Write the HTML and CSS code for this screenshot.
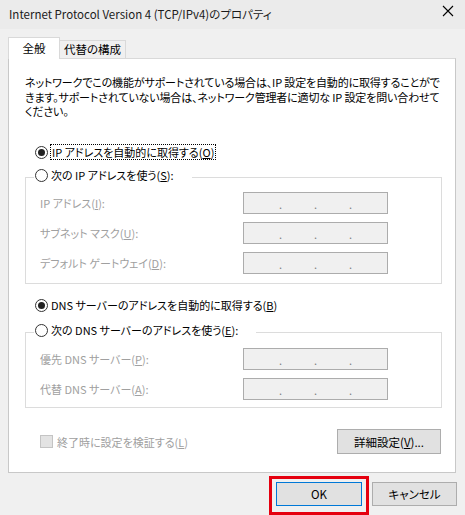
FILE: index.html
```html
<!DOCTYPE html>
<html>
<head>
    <title>Internet Protocol Version 4 (TCP/IPv4)のプロパティ</title>
    <link rel="stylesheet" href="styles.css">
</head>
<body>
    <div class="window">
        <div class="titlebar">
            <span class="title">Internet Protocol Version 4 (TCP/IPv4)のプロパティ</span>
            <svg class="close" width="12" height="12" viewBox="0 0 12 12">
                <path d="M1 1 L11 11 M11 1 L1 11" stroke="#000" stroke-width="1.1" fill="none"/>
            </svg>
        </div>

        <div class="tabs">
            <div class="tab active">全般</div>
            <div class="tab">代替の構成</div>
        </div>

        <div class="panel">
            <p class="desc">ネットワークでこの機能がサポートされている場合は、IP 設定を自動的に取得することがで<br>きます。サポートされていない場合は、ネットワーク管理者に適切な IP 設定を問い合わせて<br>ください。</p>

            <div class="option first">
                <span class="radio checked"></span>
                <span class="focus">IP アドレスを自動的に取得する(<u>O</u>)</span>
            </div>

            <fieldset class="group">
                <legend class="option">
                    <span class="radio"></span>
                    <span>次の IP アドレスを使う(<u>S</u>):</span>
                </legend>
                <div class="fields">
                    <div class="field">
                        <span class="label">IP アドレス(<u>I</u>):</span>
                        <div class="ip"><span>.</span><span>.</span><span>.</span></div>
                    </div>
                    <div class="field">
                        <span class="label">サブネット マスク(<u>U</u>):</span>
                        <div class="ip"><span>.</span><span>.</span><span>.</span></div>
                    </div>
                    <div class="field">
                        <span class="label">デフォルト ゲートウェイ(<u>D</u>):</span>
                        <div class="ip"><span>.</span><span>.</span><span>.</span></div>
                    </div>
                </div>
            </fieldset>

            <div class="option dns">
                <span class="radio checked"></span>
                <span>DNS サーバーのアドレスを自動的に取得する(<u>B</u>)</span>
            </div>

            <fieldset class="group dns-group">
                <legend class="option">
                    <span class="radio"></span>
                    <span>次の DNS サーバーのアドレスを使う(<u>E</u>):</span>
                </legend>
                <div class="fields">
                    <div class="field">
                        <span class="label">優先 DNS サーバー(<u>P</u>):</span>
                        <div class="ip"><span>.</span><span>.</span><span>.</span></div>
                    </div>
                    <div class="field">
                        <span class="label">代替 DNS サーバー(<u>A</u>):</span>
                        <div class="ip"><span>.</span><span>.</span><span>.</span></div>
                    </div>
                </div>
            </fieldset>

            <div class="bottom-row">
                <div class="check">
                    <span class="box"></span>
                    <span>終了時に設定を検証する(<u>L</u>)</span>
                </div>
                <button class="btn advanced">詳細設定(<u>V</u>)...</button>
            </div>
        </div>

        <div class="footer">
            <span class="highlight"><button class="btn default">OK</button></span>
            <button class="btn">キャンセル</button>
        </div>
    </div>
</body>
</html>
```

FILE: styles.css
```css
body {
    margin: 0;
    font-family: "Noto Sans CJK JP", "Noto Sans", sans-serif;
    font-size: 11px;
    font-feature-settings: "palt";
    color: #000;
}
.window {
    width: 465px;
    height: 515px;
    background: #f0f0f0;
    overflow: hidden;
}
.titlebar {
    height: 29px;
    background: #ebebeb;
    display: flex;
    align-items: center;
    justify-content: space-between;
    padding: 0 11px 1px 9px;
    box-sizing: border-box;
}
.title {
    font-size: 11.5px;
    color: #1a1a1a;
}
.close {
    display: block;
    margin-top: -6px;
}

/* tabs */
.tabs {
    display: flex;
    align-items: flex-end;
    height: 21px;
    margin: 8px 0 0 8px;
}
.tab {
    height: 18px;
    line-height: 17px;
    box-sizing: border-box;
    width: 66px;
    text-align: center;
    font-size: 11.5px;
    border: 1px solid #d9d9d9;
    border-left: none;
    border-bottom: none;
    background: #f0f0f0;
}
.tab.active {
    position: relative;
    z-index: 1;
    width: 52px;
    height: 22px;
    line-height: 20px;
    margin-bottom: -1px;
    border-left: 1px solid #d9d9d9;
    background: #fff;
}

/* panel */
.panel {
    width: 448px;
    height: 415px;
    margin-left: 8px;
    box-sizing: border-box;
    border: 1px solid #c8c8c8;
    border-top-color: #d9d9d9;
    background: #fff;
    padding: 16px 13px 0 16px;
}
.desc {
    margin: 0;
    height: 44px;
    line-height: 14.5px;
    letter-spacing: -0.15px;
    white-space: nowrap;
}
.option {
    display: flex;
    align-items: center;
    height: 16px;
    margin-left: 10px;
    white-space: nowrap;
}
.option.first {
    margin-top: 25px;
}
.option.dns {
    margin-top: 13px;
}
.radio {
    width: 13px;
    height: 13px;
    box-sizing: border-box;
    border: 1px solid #333;
    border-radius: 50%;
    background: #fff;
    margin-right: 3px;
    display: flex;
    align-items: center;
    justify-content: center;
    flex-shrink: 0;
}
.radio.checked::after {
    content: "";
    width: 7px;
    height: 7px;
    border-radius: 50%;
    background: #222;
}
.focus {
    outline: 1px dotted #000;
    outline-offset: 0;
    padding: 0 1px;
    line-height: 14px;
}

/* group boxes */
.group {
    margin: 7px 0 0 0;
    padding: 0;
    border: 1px solid #dcdcdc;
    min-inline-size: 0;
}
.dns-group {
    margin-top: 9px;
}
.group legend.option {
    height: 21px;
    padding: 0 18px 5px 1px;
    margin-left: 8px;
    box-sizing: border-box;
    background: #fff;
}
.fields {
    display: flex;
    flex-direction: column;
    gap: 8px;
    padding: 4px 0 9px 14px;
}
.dns-group .fields {
    padding-top: 5px;
    padding-bottom: 7px;
}
.field {
    display: flex;
    align-items: center;
    height: 22px;
    color: #a0a0a0;
}
.label {
    width: 203px;
    white-space: nowrap;
}
.ip {
    width: 145px;
    height: 22px;
    box-sizing: border-box;
    border: 1px solid #acacac;
    background: #f0f0f0;
    display: flex;
    justify-content: center;
    gap: 32px;
    line-height: 22px;
    color: #808080;
}

/* bottom row */
.bottom-row {
    display: flex;
    align-items: center;
    justify-content: space-between;
    margin-top: 21px;
    height: 25px;
}
.check {
    display: flex;
    align-items: center;
    margin-left: 15px;
    color: #a0a0a0;
}
.box {
    width: 13px;
    height: 13px;
    box-sizing: border-box;
    border: 1px solid #c4c4c4;
    background: #e3e3e3;
    margin-right: 4px;
}
.btn {
    font-family: inherit;
    font-size: 11.5px;
    font-feature-settings: "palt";
    color: #000;
    background: #e1e1e1;
    border: 1px solid #adadad;
    width: 85px;
    height: 24px;
    padding: 0;
}
.btn.advanced {
    width: 104px;
    height: 25px;
    margin-right: 1px;
}

/* footer */
.footer {
    display: flex;
    justify-content: flex-end;
    gap: 10px;
    margin-top: 9px;
    padding-right: 8px;
}
.btn.default {
    width: 86px;
    border-color: #0078d7;
    display: block;
}
.highlight {
    position: relative;
}
.highlight::after {
    content: "";
    position: absolute;
    left: -7px;
    right: -7px;
    top: -6px;
    bottom: -9px;
    border: 3px solid #e5000f;
}
```
